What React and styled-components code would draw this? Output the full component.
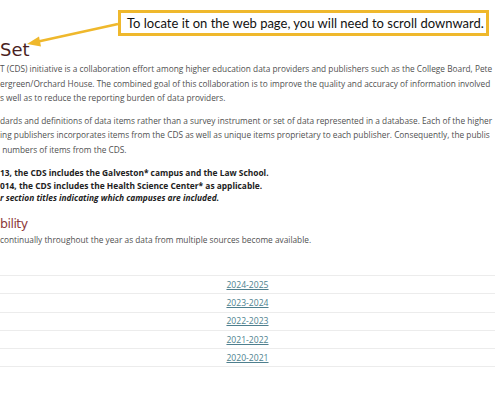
import React from "react";
import styled, { createGlobalStyle } from "styled-components";

const GlobalStyle = createGlobalStyle`
  html, body {
    margin: 0;
    padding: 0;
    background: #ffffff;
  }
`;

const years = ["2024-2025", "2023-2024", "2022-2023", "2021-2022", "2020-2021"];

function App() {
  return (
    <>
      <GlobalStyle />
      <Page>
        {/* ANNOTATION OVER THE PAGE */}
        <Callout>To locate it on the web page, you will need to scroll downward.</Callout>
        <Arrow width="495" height="60" viewBox="0 0 495 60">
          <line x1="118" y1="24" x2="36" y2="42" stroke="#efb82c" strokeWidth="2.6" />
          <polygon points="27,44 39,36.5 41,46.5" fill="#efb82c" />
        </Arrow>

        <Content>
          <Title>Set</Title>
          <Paragraph>
            <Line>T (CDS) initiative is a collaboration effort among higher education data providers and publishers such as the College Board, Pete</Line>
            <Line>ergreen/Orchard House. The combined goal of this collaboration is to improve the quality and accuracy of information involved</Line>
            <Line>s well as to reduce the reporting burden of data providers.</Line>
          </Paragraph>
          <Paragraph $gap={10}>
            <Line>dards and definitions of data items rather than a survey instrument or set of data represented in a database. Each of the higher</Line>
            <Line>ing publishers incorporates items from the CDS as well as unique items proprietary to each publisher. Consequently, the publis</Line>
            <Line>&nbsp;numbers of items from the CDS.</Line>
          </Paragraph>
          <Notes>
            <Line>13, the CDS includes the Galveston* campus and the Law School.</Line>
            <Line>014, the CDS includes the Health Science Center* as applicable.</Line>
            <Line>
              <em>r section titles indicating which campuses are included.</em>
            </Line>
          </Notes>
          <SubTitle>bility</SubTitle>
          <Paragraph $gap={0}>
            <Line>continually throughout the year as data from multiple sources become available.</Line>
          </Paragraph>

          <YearTable>
            {years.map((y) => (
              <Row key={y}>
                <YearLink href="#">{y}</YearLink>
              </Row>
            ))}
          </YearTable>
        </Content>
      </Page>
    </>
  );
}

export default App;

const Page = styled.div`
  position: relative;
  width: 495px;
  height: 400px;
  overflow: hidden;
  background: #ffffff;
  font-family: "Open Sans", "Noto Sans", sans-serif;
`;

const Callout = styled.div`
  position: absolute;
  left: 118px;
  top: 10px;
  width: 371px;
  height: 26px;
  box-sizing: border-box;
  border: 3px solid #efb82c;
  background: #ffffff;
  display: flex;
  align-items: center;
  padding-left: 6px;
  font-family: Lato, "Noto Sans", sans-serif;
  font-size: 13px;
  color: #111111;
  white-space: nowrap;
  z-index: 2;
`;

const Arrow = styled.svg`
  position: absolute;
  left: 0;
  top: 0;
  z-index: 2;
`;

const Content = styled.div`
  padding-top: 37px;
  display: flex;
  flex-direction: column;
`;

const Title = styled.h1`
  margin: 0;
  font-family: "DejaVu Sans", sans-serif;
  font-weight: 400;
  font-size: 18px;
  line-height: 25px;
  color: #4a1f1f;
`;

const Paragraph = styled.div`
  font-size: 8.3px;
  line-height: 14.5px;
  color: #505050;
  margin-bottom: ${(p) => (p.$gap ?? 8)}px;
`;

const Line = styled.div`
  white-space: nowrap;
`;

const Notes = styled.div`
  font-size: 8.4px;
  line-height: 12.5px;
  font-weight: 700;
  color: #222222;
  margin-bottom: 10px;
`;

const SubTitle = styled.h2`
  margin: 0;
  font-family: "DejaVu Sans", sans-serif;
  font-weight: 400;
  font-size: 12.5px;
  letter-spacing: -0.5px;
  line-height: 18px;
  color: #8e3b3b;
`;

const YearTable = styled.div`
  margin-top: 28px;
  border-top: 1px solid #ececec;
  display: flex;
  flex-direction: column;
`;

const Row = styled.div`
  height: 17.3px;
  border-bottom: 1px solid #ececec;
  display: flex;
  align-items: center;
  justify-content: center;
`;

const YearLink = styled.a`
  font-size: 8.6px;
  color: #4e7f8e;
  text-decoration: underline;
`;
